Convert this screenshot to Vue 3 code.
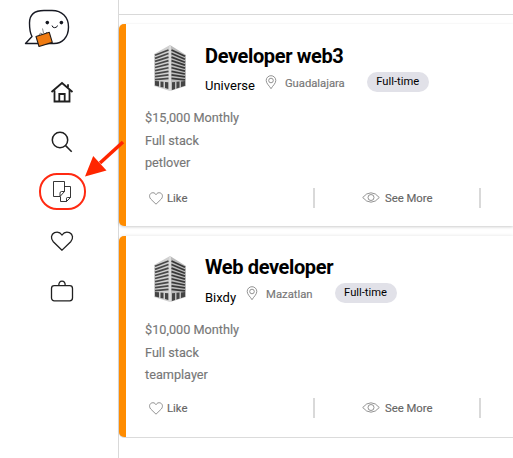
<script setup>
const jobs = [
  { title: 'Developer web3', company: 'Universe', city: 'Guadalajara', pay: '$15,000 Monthly', trait: 'petlover' },
  { title: 'Web developer', company: 'Bixdy', city: 'Mazatlan', pay: '$10,000 Monthly', trait: 'teamplayer' },
]
const floors = [0, 1, 2, 3, 4, 5, 6, 7, 8]
</script>

<template>
  <div class="page">
    <aside class="sidebar">
      <svg class="logo" viewBox="0 0 46 40">
        <path d="M1.5 35.5L8 28.5C6 25 5.5 21 5.5 15C5.5 6 11 2.5 20 2.5H28C38 2.5 44.5 9 44.5 19C44.5 29.5 38 35.5 30 35.5Z" fill="#fff" stroke="#171923" stroke-width="1.4" stroke-linejoin="round" />
        <circle cx="23.3" cy="14.6" r="1.8" fill="#151720" />
        <circle cx="37.4" cy="14.6" r="1.8" fill="#151720" />
        <path d="M28 17.5Q28.4 19.7 30.7 19.7T33.5 17.5" fill="none" stroke="#151720" />
        <path d="M15 27l1.5-2 2 1M19.5 25l-1-4.5M22 25l1-1" fill="none" stroke="#555" stroke-width=".7" />
        <path d="M12 28.5L25.3 24.3L28.3 34.4L15 38.5Z" fill="#ef7b12" stroke="#211b18" stroke-width="1.1" stroke-linejoin="round" />
      </svg>
      <nav>
        <svg viewBox="0 0 24 24" class="ink home"><path d="M1.5 12L12 3L22.5 12M4.5 10.5V21.5H19.5V10M9.3 21V14H14.7V21M18 7.3V4.3" /></svg>
        <svg viewBox="0 0 24 24" class="ink search"><circle cx="10" cy="10" r="7.7" /><path d="M15.6 15.6L21.7 21.7" /></svg>
        <span class="ring">
          <svg viewBox="0 0 24 24" class="ink pages"><path d="M9 16.5H2.5V1.5H13.5V11.5L9 16.5V13.2Q9 11.5 10.5 11.5H13.5M13.5 6.5H19.5V17.5L15.5 21.5H9.5V16.5M15.5 21.5V18.2Q15.5 17.5 16.5 17.5H19.5" /></svg>
        </span>
        <svg viewBox="0 0 24 24" class="ink heart"><path d="M12 22.2L3.3 13.7C.4 10.5 1 6.2 4.5 4.6C7.8 3.3 10.5 4.8 12 7C13.5 4.8 16.2 3.3 19.5 4.6C23 6.2 23.6 10.5 20.7 13.7Z" /></svg>
        <svg viewBox="0 0 24 24" class="ink bag"><rect x="1.5" y="6.6" width="21" height="15.2" rx="2.8" /><path d="M8.8 6.6Q8.8 2.2 12 2.2T15.2 6.6" /></svg>
      </nav>
    </aside>
    <main>
      <div class="topline"></div>
      <article v-for="job in jobs" :key="job.title">
        <header>
          <svg class="building" viewBox="0 0 34 48">
            <path d="M1 10L17 1V47L1 42Z" fill="#d0d0d0" />
            <path d="M17 1L33 11V42L17 47Z" fill="#bbb" />
            <path v-for="f in floors" :key="'l' + f" :d="`M2 ${11.3 + f * 3.05}L15.5 ${6 + f * 3.55}`" stroke="#484848" stroke-width="1.7" />
            <path v-for="f in floors" :key="'r' + f" :d="`M18.5 ${6 + f * 3.55}L32 ${12.3 + f * 2.95}`" stroke="#383838" stroke-width="1.7" />
            <path d="M2 37L6 37.3V42.5L2 41.5ZM7.5 37.5L10.5 37.7V43.5L7.5 43ZM12 38L15.3 38.2V45L12 44ZM19 38.2L22 38V45L19 46ZM23.5 37.8L26.5 37.5V43.5L23.5 44.5ZM28 37.5L32 37V41.7L28 43Z" fill="#444" />
            <path d="M17 1V47" stroke="#ddd" stroke-width="2" />
          </svg>
          <div class="heading">
            <h2>{{ job.title }}</h2>
            <div class="meta">
              <span class="company">{{ job.company }}</span>
              <svg class="pin" viewBox="0 0 12 15"><path d="M6 13.7C4.5 11 1.2 8.5 1.2 5.5A4.8 4.8 0 0 1 10.8 5.5C10.8 8.5 7.5 11 6 13.7Z" /><circle cx="6" cy="5.5" r="2.3" /></svg>
              <span class="city">{{ job.city }}</span>
              <span class="badge">Full-time</span>
            </div>
          </div>
        </header>
        <div class="details">
          <p>{{ job.pay }}</p>
          <p>Full stack</p>
          <p>{{ job.trait }}</p>
        </div>
        <footer>
          <div class="action like">
            <svg viewBox="0 0 14 14"><path d="M7 13.2L1.7 8C-.1 5.8 .3 3.1 2.5 2C4.5 1.2 6.1 2.1 7 3.7C7.9 2.1 9.5 1.2 11.5 2C13.7 3.1 14.1 5.8 12.3 8Z" /></svg>
            <span>Like</span>
          </div>
          <i class="divider"></i>
          <div class="action more">
            <svg viewBox="0 0 18 11"><path d="M.7 5.5Q4.5 .8 9 .8T17.3 5.5Q13.5 10.2 9 10.2T.7 5.5Z" /><circle cx="9" cy="5.5" r="3" /></svg>
            <span>See More</span>
          </div>
          <i class="divider"></i>
        </footer>
      </article>
    </main>
    <svg class="arrow" viewBox="0 0 42 42"><path d="M39 4L16 25" stroke="#ff2600" stroke-width="3.6" /><path d="M1 38.5L9.2 18L22.5 32.5Z" fill="#ff2600" /></svg>
  </div>
</template>

<style>
body { margin: 0; background: #fff; }
</style>

<style scoped>
.page { display: flex; width: 513px; height: 458px; overflow: hidden; position: relative; font-family: Roboto, sans-serif; box-sizing: border-box; }
.sidebar { width: 118px; flex: none; border-right: 1px solid #d9d9d9; padding-top: 8px; }
.logo { display: block; width: 46px; height: 40px; margin-left: 24px; }
nav { display: flex; flex-direction: column; align-items: center; width: 124px; margin-top: 32px; }
nav > svg { width: 24px; height: 24px; }
.ink { fill: none; stroke: #202020; stroke-width: 1.3; display: block; }
.home { stroke-width: 1.8; }
.search { margin-top: 26px; stroke-width: 1.5; }
.ring { width: 43px; height: 33px; border: 2px solid #ff2a12; border-radius: 18px; margin: 19px 0 0 1px; display: flex; align-items: center; justify-content: center; }
.ring svg { width: 24px; height: 24px; stroke-width: .9; }
nav .heart { margin-top: 18px; }
nav .bag { margin-top: 27px; }
main { flex: 1; min-width: 0; }
.topline { height: 14px; border-bottom: 1px solid #d9d9d9; margin-bottom: 9px; }
article { height: 202px; box-sizing: border-box; border-left: 7px solid #ff8c00; border-radius: 5px 0 0 5px; box-shadow: 0 1px 3px #0003; margin-bottom: 10px; padding: 20px 0 0 19px; background: #fff; }
article:last-child { box-shadow: 0 -1px 3px #0001, 0 1px 0 #ddd; height: 200.5px; padding-top: 19px; }
header { display: flex; height: 58px; }
.building { width: 34px; height: 48px; margin-left: 8px; }
.heading { margin-left: 18px; }
h2 { margin: 0; font-size: 20px; line-height: 24px; font-weight: 700; letter-spacing: -.37px; white-space: nowrap; }
.meta { display: flex; align-items: flex-start; margin-top: 4px; white-space: nowrap; }
.company { font-size: 13px; line-height: 18px; padding-top: 5px; }
.pin { width: 12px; height: 15px; margin: 3px 0 0 10px; }
.pin, .action svg { fill: none; stroke: #777; stroke-width: .8; }
.city { font-size: 11.3px; line-height: 16px; color: #777; margin: 4px 22px 0 8px; letter-spacing: -.02px; -webkit-text-stroke: .15px; }
.badge { width: 62px; height: 20px; border-radius: 10px; background: #e1e1e8; font-size: 11.2px; line-height: 19px; text-align: center; }
article:last-child .company { padding-top: 6px; }
.details { padding-top: 5px; }
article:last-child .details { padding-top: 6px; }
p { margin: 0; font-size: 12.7px; line-height: 22.5px; color: #777; -webkit-text-stroke: .15px; }
footer { display: flex; align-items: center; margin-top: 13px; height: 20px; color: #666; font-size: 11.3px; -webkit-text-stroke: .15px; }
article:last-child footer { margin-top: 11px; }
.action { display: flex; align-items: center; box-sizing: border-box; }
.action span { padding-top: 1px; }
.like { width: 168px; padding-left: 4px; }
.like svg { width: 14px; height: 14px; margin-right: 4px; }
.more { width: 164px; padding-left: 47px; }
.more svg { width: 18px; height: 11px; margin-right: 5px; }
.divider { width: 2px; height: 20px; background: #d9d9d9; }
.arrow { position: absolute; left: 84px; top: 138px; width: 42px; height: 42px; }
</style>
